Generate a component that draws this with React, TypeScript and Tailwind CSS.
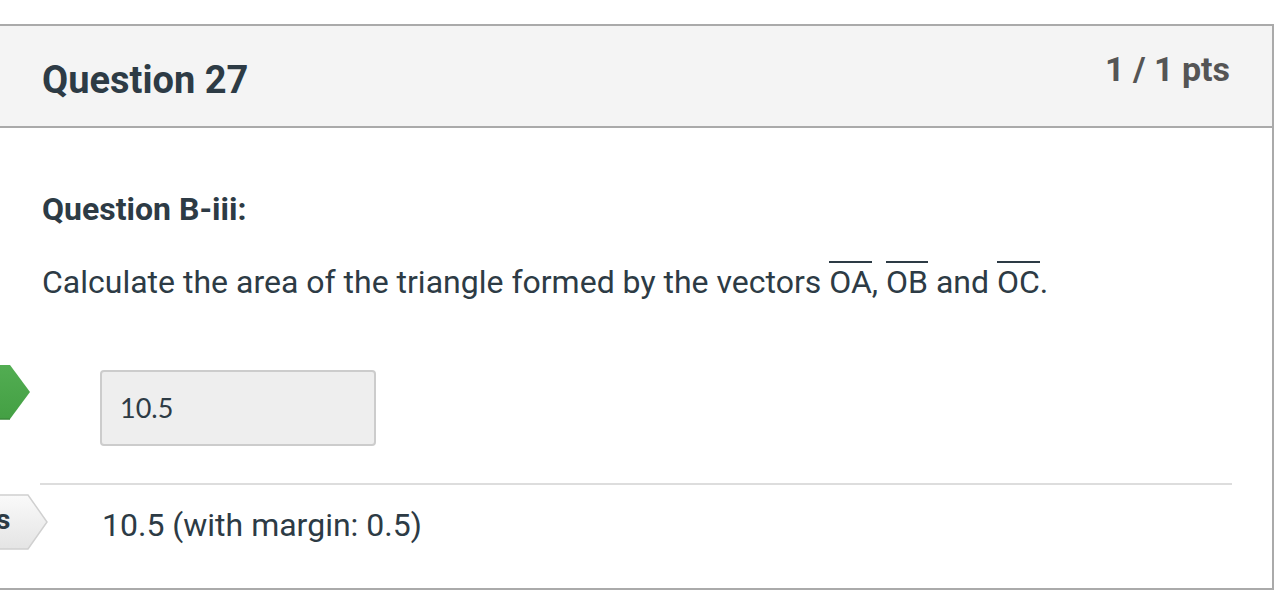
import React from "react";

function GreenArrow() {
  return (
    <svg width="32" height="56" viewBox="0 0 32 56" className="absolute left-0 top-[-6px]">
      <defs>
        <linearGradient id="g1" x1="0" y1="0" x2="0" y2="1">
          <stop offset="0" stopColor="#52ad52" />
          <stop offset="1" stopColor="#44a044" />
        </linearGradient>
      </defs>
      <polygon points="-2,1 10,1 30,28 10,55 -2,55" fill="url(#g1)" />
      <polyline points="10,55 -2,55" stroke="#3a8a3a" strokeWidth="1.5" fill="none" />
    </svg>
  );
}

function GrayTag() {
  return (
    <div className="absolute left-0 top-[-15px] h-[56px] w-[50px]">
      <svg width="50" height="56" viewBox="0 0 50 56" className="absolute left-0 top-0">
        <defs>
          <linearGradient id="g2" x1="0" y1="0" x2="0" y2="1">
            <stop offset="0" stopColor="#fafafa" />
            <stop offset="1" stopColor="#e4e4e4" />
          </linearGradient>
        </defs>
        <polygon points="-2,1 28,1 47,28 28,55 -2,55" fill="url(#g2)" stroke="#d0d0d0" strokeWidth="1.5" />
      </svg>
      <span className="absolute left-[-4px] top-[12px] text-[28px] font-bold leading-none text-[#2d3b45] [font-family:Roboto,sans-serif]">
        s
      </span>
    </div>
  );
}

function Vec({ t }: { t: string }) {
  return (
    <span className="relative inline-block">
      <span className="absolute left-0 right-0 top-[-5px] h-[2px] bg-[#2d3b45]" />
      {t}
    </span>
  );
}

export default function App() {
  return (
    <div className="min-h-[600px] w-[1288px] bg-white pt-[24px] [font-family:Roboto,sans-serif] text-[#2d3b45]">
      <div className="w-[1274px] border-y-2 border-r-2 border-[#aaaaaa] bg-white">
        <div className="flex h-[102px] items-start justify-between border-b-2 border-[#aaaaaa] bg-[#f4f4f4] pl-[42px] pr-[42px]">
          <h2 className="pt-[35px] text-[38px] font-bold leading-none">Question 27</h2>
          <div className="pt-[26px] text-[34px] font-bold leading-none text-[#555555]">1 / 1 pts</div>
        </div>
        <div className="pl-[42px] pr-[40px] pb-[47px]">
          <div className="pt-[65px] text-[32px] font-bold leading-none">Question B-iii:</div>
          <div className="pt-[41px] text-[32px] leading-none">
            Calculate the area of the triangle formed by the vectors <Vec t="OA" />, <Vec t="OB" /> and <Vec t="OC" />.
          </div>
          <div className="relative ml-[-42px] mt-[72px] pl-[100px]">
            <GreenArrow />
            <div className="flex h-[76px] w-[276px] items-center rounded-[4px] border-2 border-[#cccccc] bg-[#eeeeee] pl-[18px] text-[27px] text-[#2d3b45] [font-family:Lato,sans-serif]">
              10.5
            </div>
          </div>
          <div className="ml-[-2px] mt-[37px] h-[2px] w-[1192px] bg-[#dddddd]" />
          <div className="relative ml-[-42px] mt-[24px] pl-[102px]">
            <GrayTag />
            <div className="text-[32px] leading-none">10.5 (with margin: 0.5)</div>
          </div>
        </div>
      </div>
    </div>
  );
}
